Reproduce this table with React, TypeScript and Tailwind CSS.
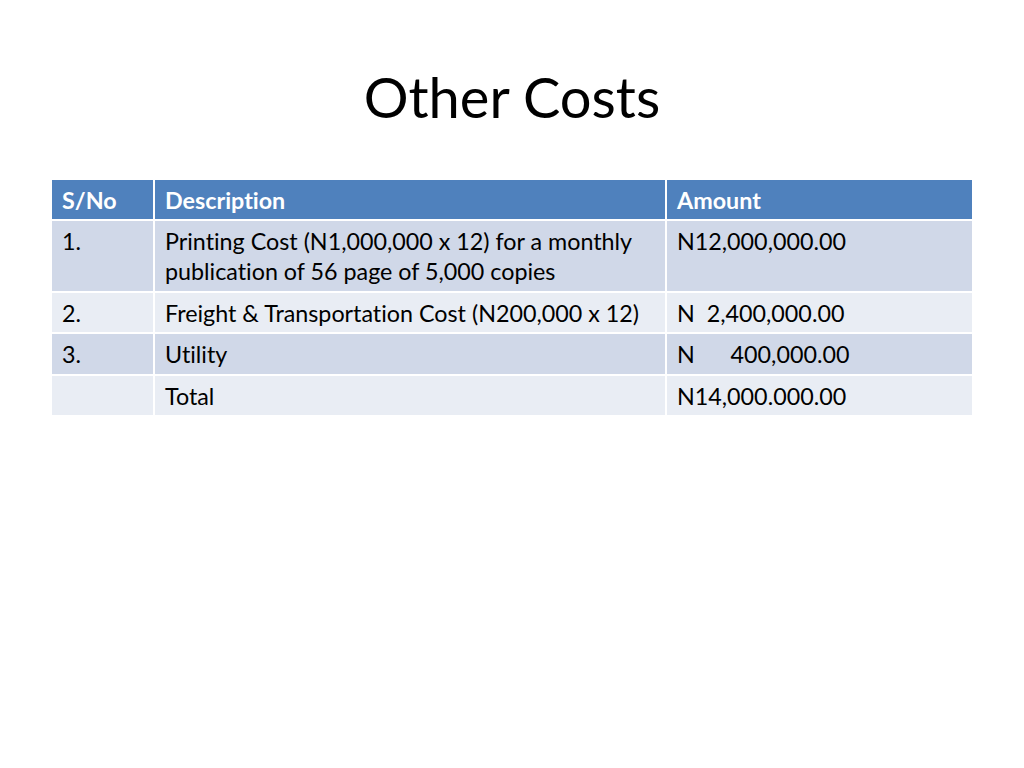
const rows = [
  { no: "1.", desc: ["Printing Cost (N1,000,000 x 12) for a monthly", "publication of 56 page of 5,000 copies"], amt: "N12,000,000.00", h: "h-[70px]", bg: "bg-[#d0d8e8]" },
  { no: "2.", desc: ["Freight & Transportation Cost (N200,000 x 12)"], amt: "N  2,400,000.00", h: "h-[39px]", bg: "bg-[#e9edf4]" },
  { no: "3.", desc: ["Utility"], amt: "N      400,000.00", h: "h-[40px]", bg: "bg-[#d0d8e8]" },
  { no: "", desc: ["Total"], amt: "N14,000.000.00", h: "h-[39px]", bg: "bg-[#e9edf4]" },
];

export default function App() {
  return (
    <div className="w-[1024px] h-[768px] bg-white font-['Lato',sans-serif] text-black [font-variant-ligatures:none]">
      <div className="pt-[66px] h-[180px] text-center text-[56px] leading-[62px]">Other Costs</div>
      <div className="ml-[52px] grid grid-cols-[101px_510px_305px] gap-[2px] bg-white text-[23.3px] leading-[30px]">
        <div className="h-[39px] bg-[#4f81bd] px-[10px] pt-[5px] font-bold text-white">S/No</div>
        <div className="h-[39px] bg-[#4f81bd] px-[10px] pt-[5px] font-bold text-white">Description</div>
        <div className="h-[39px] bg-[#4f81bd] px-[10px] pt-[5px] font-bold text-white">Amount</div>
        {rows.map((r, i) => (
          <div key={i} className="contents">
            <div className={`${r.h} ${r.bg} px-[10px] pt-[5px]`}>{r.no}</div>
            <div className={`${r.h} ${r.bg} px-[10px] pt-[5px] whitespace-nowrap`}>
              {r.desc.map((d) => (
                <div key={d}>{d}</div>
              ))}
            </div>
            <div className={`${r.h} ${r.bg} px-[10px] pt-[5px] whitespace-pre`}>{r.amt}</div>
          </div>
        ))}
      </div>
    </div>
  );
}
